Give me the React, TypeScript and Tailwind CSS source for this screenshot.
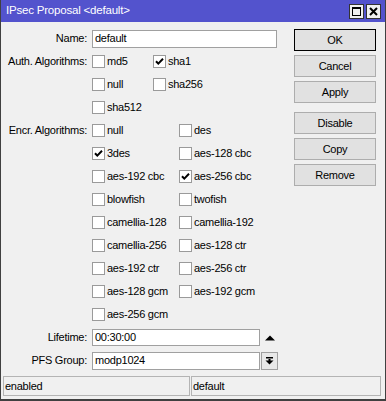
import { FC, ReactNode } from "react";

type Opt = { label: string; checked?: boolean };

const authRows: Opt[][] = [
    [{ label: "md5" }, { label: "sha1", checked: true }],
    [{ label: "null" }, { label: "sha256" }],
    [{ label: "sha512" }],
];

const encrRows: Opt[][] = [
    [{ label: "null" }, { label: "des" }],
    [{ label: "3des", checked: true }, { label: "aes-128 cbc" }],
    [{ label: "aes-192 cbc" }, { label: "aes-256 cbc", checked: true }],
    [{ label: "blowfish" }, { label: "twofish" }],
    [{ label: "camellia-128" }, { label: "camellia-192" }],
    [{ label: "camellia-256" }, { label: "aes-128 ctr" }],
    [{ label: "aes-192 ctr" }, { label: "aes-256 ctr" }],
    [{ label: "aes-128 gcm" }, { label: "aes-192 gcm" }],
    [{ label: "aes-256 gcm" }],
];

const Check: FC<Opt & { width: string }> = ({ label, checked, width }) => (
    <div className={`flex items-center ${width}`}>
        <span className="w-[13px] h-[13px] border border-[#9a9a9a] bg-white flex items-center justify-center shrink-0">
            {checked && (
                <svg width="11" height="11" viewBox="0 0 11 11">
                    <path d="M2 5.2 L4.3 7.6 L9 2.8" stroke="#000" strokeWidth="2" fill="none" />
                </svg>
            )}
        </span>
        <span className="ml-[2px] whitespace-nowrap">{label}</span>
    </div>
);

const Row: FC<{ label?: string; children: ReactNode }> = ({ label, children }) => (
    <div className="flex items-center h-[23px]">
        <div className="w-[86px] text-right whitespace-nowrap">{label}</div>
        <div className="ml-[5px] flex items-center">{children}</div>
    </div>
);

const Button: FC<{ text: string; primary?: boolean; extra?: string }> = ({ text, primary, extra }) => (
    <div
        className={`h-[22px] w-[82px] flex items-center justify-center bg-[#e1e1e1] border ${
            primary ? "border-black" : "border-[#adadad]"
        } ${extra ?? ""}`}
    >
        {text}
    </div>
);

const App: FC = () => {
    return (
        <div className="w-[386px] h-[401px] bg-[#f0f0f0] border-l border-r border-b-2 border-[#404040] flex flex-col font-['Liberation_Sans',Arial,sans-serif] text-[11px] tracking-[-0.25px] text-black leading-none">
            {/* title bar */}
            <div className="h-[22px] bg-[#5353cd] flex items-center justify-between pl-[5px] pr-[4px] shrink-0">
                <span className="text-white text-[11.5px] tracking-[-0.2px]">IPsec Proposal &lt;default&gt;</span>
                <div className="flex gap-[2px]">
                    <div className="w-[15px] h-[15px] bg-[#f0f0f0] border border-[#333] flex items-center justify-center">
                        <svg width="11" height="11" viewBox="0 0 11 11">
                            <rect x="1.5" y="1.5" width="8" height="8" stroke="#000" strokeWidth="1" fill="none" />
                            <rect x="1" y="1" width="9" height="2" fill="#000" />
                        </svg>
                    </div>
                    <div className="w-[15px] h-[15px] bg-[#f0f0f0] border border-[#333] flex items-center justify-center">
                        <svg width="11" height="11" viewBox="0 0 11 11">
                            <path d="M2 2 L9 9 M9 2 L2 9" stroke="#000" strokeWidth="2" />
                        </svg>
                    </div>
                </div>
            </div>

            <div className="flex">
                {/* form */}
                <div className="w-[293px] pt-[5px] flex flex-col">
                    <Row label="Name:">
                        <div className="w-[185px] h-[18px] bg-white border border-[#a0a0a0] flex items-center pl-[2px]">default</div>
                    </Row>
                    {authRows.map((row, i) => (
                        <Row key={`a${i}`} label={i === 0 ? "Auth. Algorithms:" : undefined}>
                            {row.map((o) => (
                                <Check key={o.label} {...o} width="w-[61px]" />
                            ))}
                        </Row>
                    ))}
                    {encrRows.map((row, i) => (
                        <Row key={`e${i}`} label={i === 0 ? "Encr. Algorithms:" : undefined}>
                            {row.map((o) => (
                                <Check key={o.label} {...o} width="w-[87px]" />
                            ))}
                        </Row>
                    ))}
                    <Row label="Lifetime:">
                        <div className="w-[168px] h-[17px] bg-white border border-[#a0a0a0] flex items-center pl-[2px]">00:30:00</div>
                        <svg width="12" height="6" viewBox="0 0 12 6" className="ml-[4px]">
                            <polygon points="1,5.5 11,5.5 6,0.5" fill="#000" />
                        </svg>
                    </Row>
                    <Row label="PFS Group:">
                        <div className="w-[168px] h-[18px] bg-white border border-[#a0a0a0] flex items-center pl-[2px]">modp1024</div>
                        <div className="ml-[1px] w-[17px] h-[18px] bg-[#e8e8e8] border border-[#a0a0a0] flex items-center justify-center">
                            <svg width="9" height="9" viewBox="0 0 9 9">
                                <rect x="1" y="1" width="7" height="1.5" fill="#000" />
                                <rect x="3.5" y="3" width="2" height="2" fill="#000" />
                                <polygon points="0.5,4.5 8.5,4.5 4.5,8.5" fill="#000" />
                            </svg>
                        </div>
                    </Row>
                </div>

                {/* buttons */}
                <div className="pt-[7px] flex flex-col gap-[4px]">
                    <Button text="OK" primary />
                    <Button text="Cancel" />
                    <Button text="Apply" />
                    <Button text="Disable" extra="mt-[5px]" />
                    <Button text="Copy" />
                    <Button text="Remove" />
                </div>
            </div>

            {/* status bar */}
            <div className="mt-[4px] flex gap-[1px] pl-[2px] h-[20px]">
                <div className="w-[187px] border border-[#b4b4b4] flex items-center pl-[1px]">enabled</div>
                <div className="w-[190px] border border-[#b4b4b4] flex items-center pl-[1px]">default</div>
            </div>
        </div>
    );
};

export default App;
